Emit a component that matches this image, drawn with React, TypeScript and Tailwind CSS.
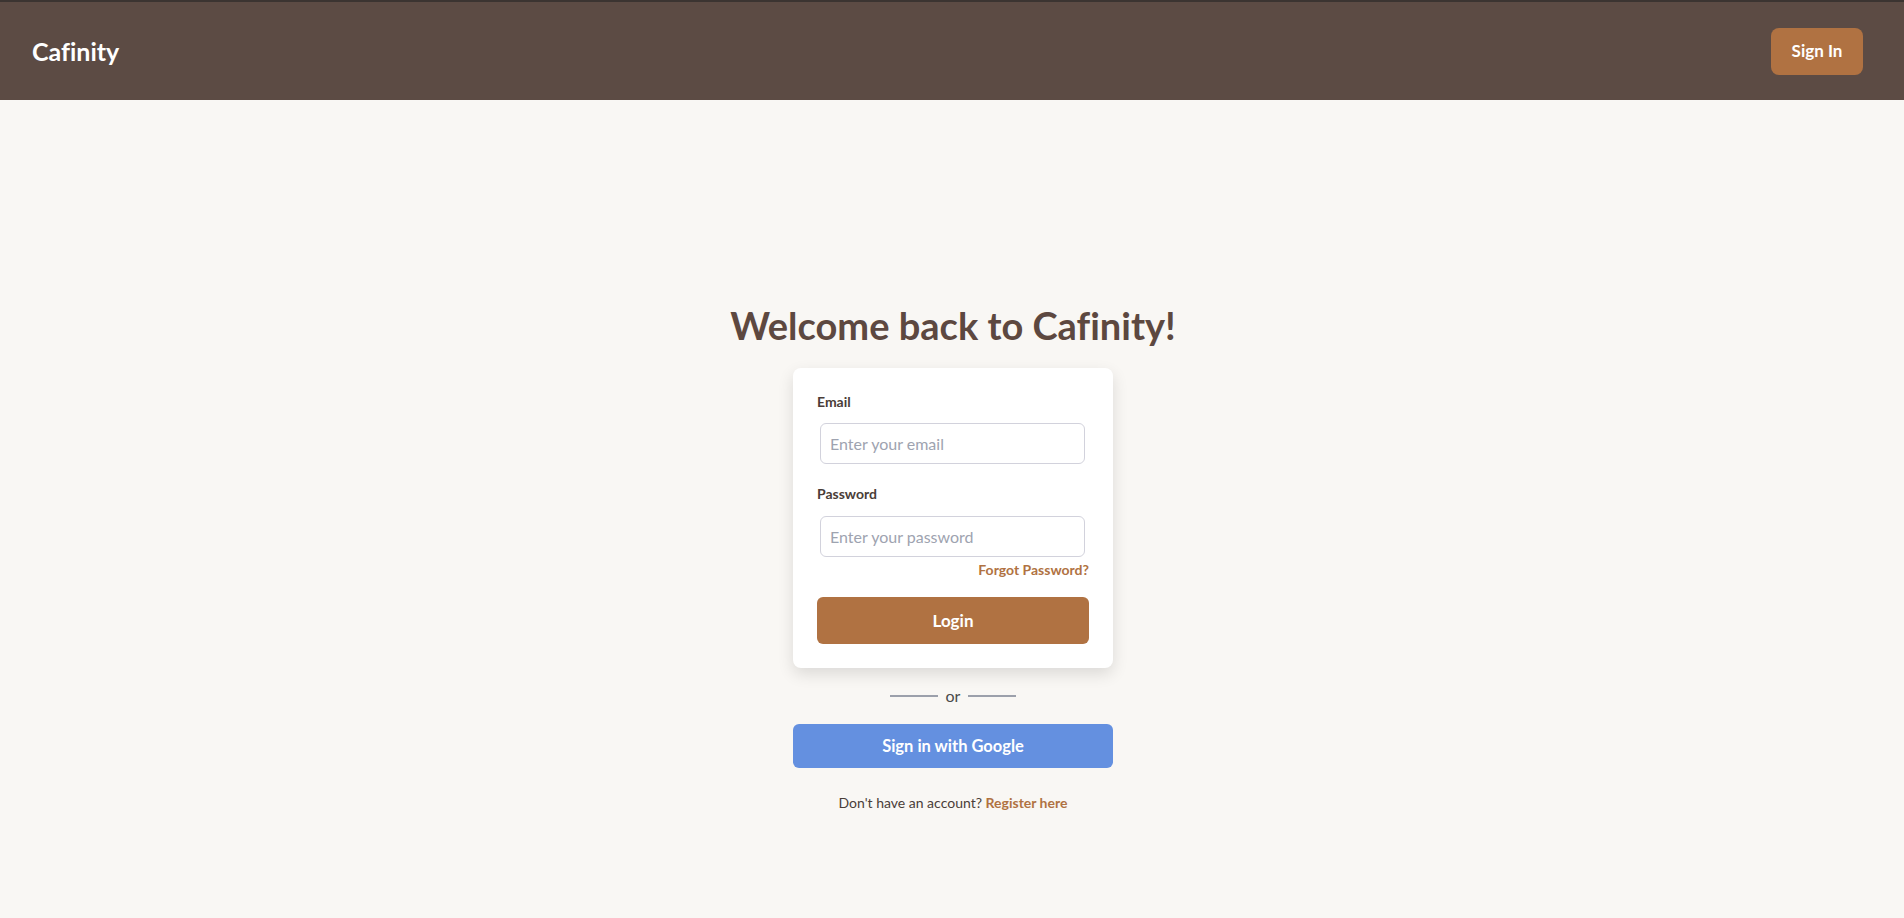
import React from "react";

export default function App() {
  return (
    <div className="min-h-screen bg-[#f9f7f4] font-['Lato',_'Liberation_Sans',_sans-serif] [font-variant-ligatures:none]">
      <header className="h-[100px] border-t-2 border-[#3b3431] bg-[#5c4b44] flex items-center justify-between pl-8 pr-[41px]">
        <div className="text-[25px] leading-none font-bold text-white">Cafinity</div>
        <button className="w-[92px] h-[47px] rounded-lg bg-[#b07242] text-white text-[17px] font-bold">
          Sign In
        </button>
      </header>
      <main className="flex flex-col items-center pt-[201px] pb-[110px] pl-[2px]">
        <h1 className="text-[38px] leading-[48px] font-bold text-[#5d4840]">Welcome back to Cafinity!</h1>
        <div className="mt-[19px] w-[320px] bg-white rounded-lg shadow-[0_6px_16px_rgba(0,0,0,0.12)] pt-6 px-6 pb-6">
          <label className="block text-[14px] leading-5 font-bold text-[#4a3d38] mb-[11px]">Email</label>
          <input
            type="email"
            placeholder="Enter your email"
            className="block ml-[3px] w-[265px] h-[41px] rounded-md border border-[#d2d2dc] px-[9px] text-[16px] text-[#333] placeholder:text-[#9ea3b0] outline-none"
          />
          <label className="block mt-5 text-[14px] leading-5 font-bold text-[#4a3d38] mb-3">Password</label>
          <input
            type="password"
            placeholder="Enter your password"
            className="block ml-[3px] w-[265px] h-[41px] rounded-md border border-[#d2d2dc] px-[9px] text-[16px] text-[#333] placeholder:text-[#9ea3b0] outline-none"
          />
          <div className="mt-[3px] text-right text-[14px] leading-5 font-bold text-[#b07242]">
            <a href="#">Forgot Password?</a>
          </div>
          <button className="mt-[17px] w-full h-[47px] rounded-md bg-[#b07242] text-white text-[17px] font-bold">
            Login
          </button>
        </div>
        <div className="mt-4 flex items-center h-6">
          <div className="w-12 h-[2px] bg-[#9ca0ab]" />
          <span className="mx-2 text-[16px] leading-6 text-[#4a4a4a]">or</span>
          <div className="w-12 h-[2px] bg-[#9ca0ab]" />
        </div>
        <button className="mt-4 w-[320px] h-[44px] rounded-md bg-[#6490e0] text-white text-[16.5px] font-bold">
          Sign in with Google
        </button>
        <p className="mt-[25px] text-[14px] leading-5 text-[#4a3d38]">
          Don't have an account?{" "}
          <a href="#" className="font-bold text-[#b07242]">Register here</a>
        </p>
      </main>
    </div>
  );
}
